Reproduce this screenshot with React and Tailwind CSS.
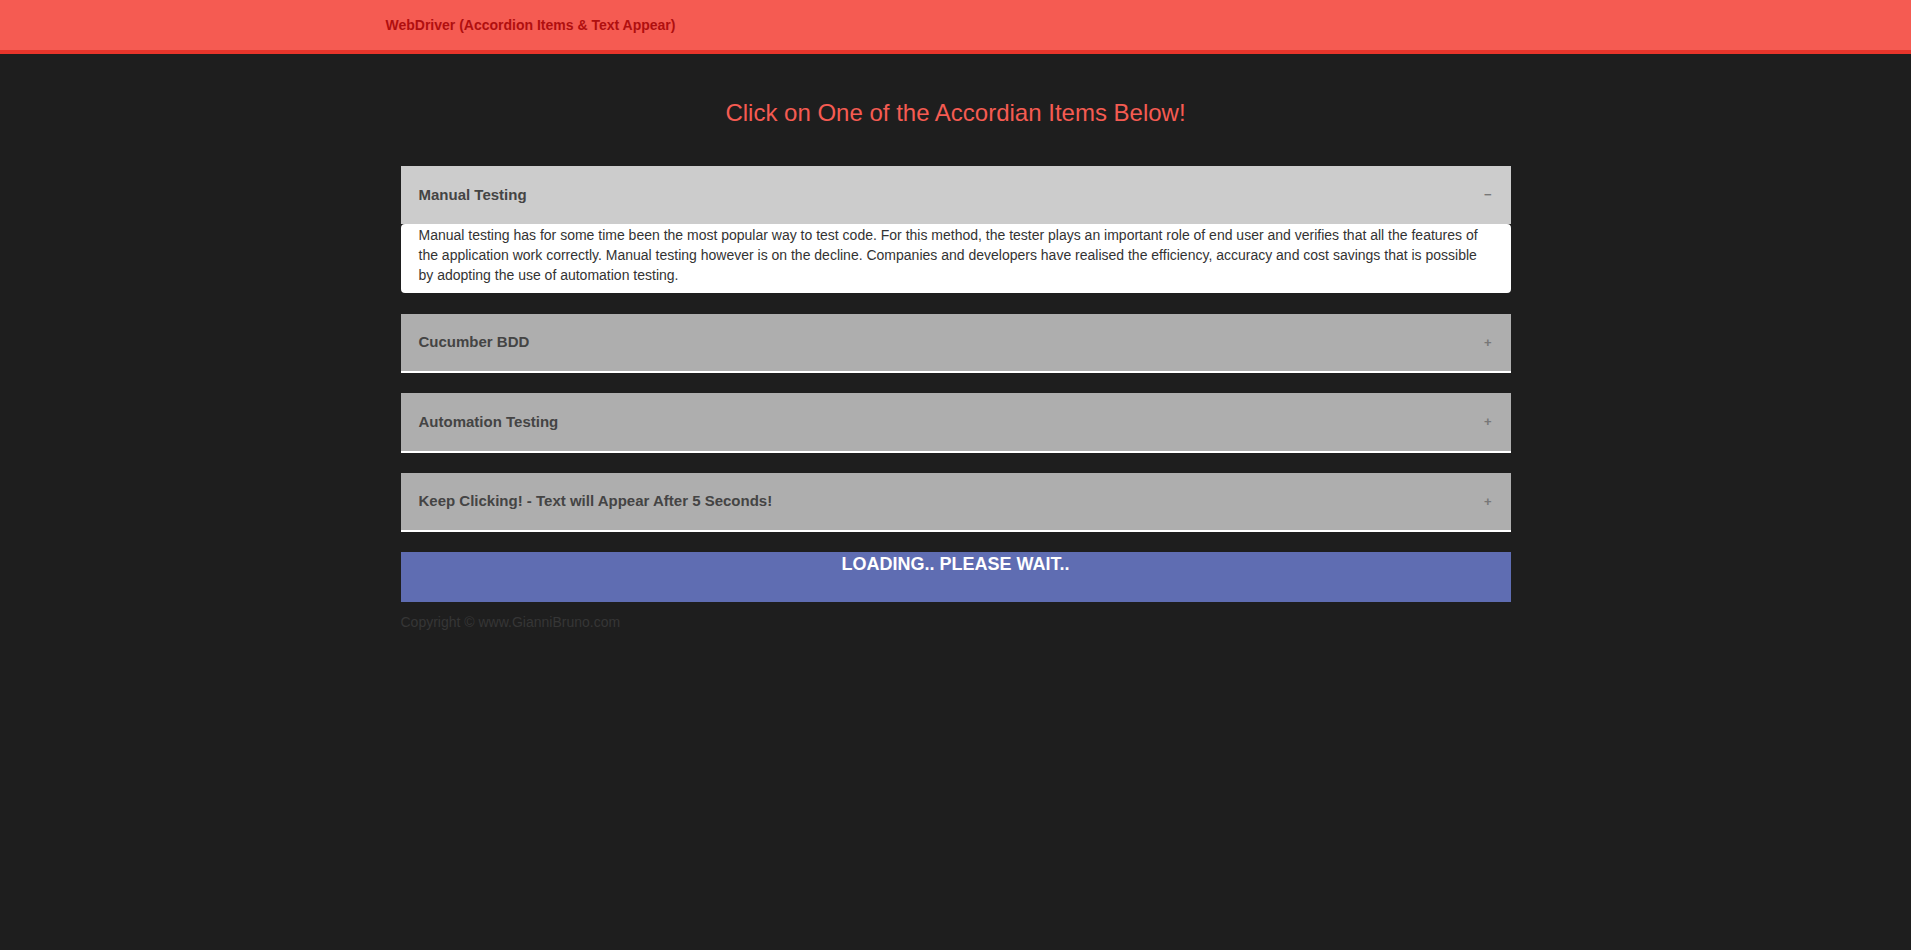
import React from "react";

function Item({ title, open, children, collapsedHeight = "h-[57px]" }) {
  return (
    <div className={open ? "mb-[21px]" : "mb-[20px]"}>
      <div
        className={`${open ? "h-[58px] bg-[#cccccc]" : `${collapsedHeight} bg-[#aeaeae]`} flex items-center justify-between pl-[18px] pr-[19px]`}
      >
        <span className="text-[15px] font-bold text-[#444444]">{title}</span>
        <span className="text-[13px] font-bold text-[#777777]">{open ? "\u2212" : "+"}</span>
      </div>
      {open ? (
        <div className="bg-white rounded-[4px] pl-[18px] pr-[20px] pt-[1px] pb-[8px] text-[14px] leading-[20px] text-[#333333]">
          {children}
        </div>
      ) : (
        <div className="h-[2px] bg-white" />
      )}
    </div>
  );
}

export default function App() {
  return (
    <div
      className="min-h-screen bg-[#1e1e1e]"
      style={{ fontFamily: '"Liberation Sans", Arial, sans-serif' }}
    >
      <nav className="h-[54px] bg-[#f55b52] border-b-4 border-[#e8352b]">
        <div className="w-[1140px] mx-auto h-[50px] flex items-center">
          <span className="text-[14px] font-bold text-[#b00f0f]">
            WebDriver (Accordion Items &amp; Text Appear)
          </span>
        </div>
      </nav>
      <div className="w-[1140px] mx-auto px-[15px]">
        <h1 className="mt-[46px] mb-[40px] h-[26px] leading-[26px] text-center text-[24px] text-[#f55b52]">
          Click on One of the Accordian Items Below!
        </h1>
        <Item title="Manual Testing" open>
          Manual testing has for some time been the most popular way to test code. For this method, the tester plays an important role of end user and verifies that all the features of the application work correctly. Manual testing however is on the decline. Companies and developers have realised the efficiency, accuracy and cost savings that is possible by adopting the use of automation testing.
        </Item>
        <Item title="Cucumber BDD" />
        <Item title="Automation Testing" collapsedHeight="h-[58px]" />
        <Item title="Keep Clicking! - Text will Appear After 5 Seconds!" />
        <div className="h-[50px] bg-[#5f6db2] pt-[1px] text-center">
          <span className="text-[18px] leading-[20px] font-bold text-white">LOADING.. PLEASE WAIT..</span>
        </div>
        <p className="mt-[10px] text-[14px] leading-[20px] text-[#363636]">
          Copyright © www.GianniBruno.com
        </p>
      </div>
    </div>
  );
}
